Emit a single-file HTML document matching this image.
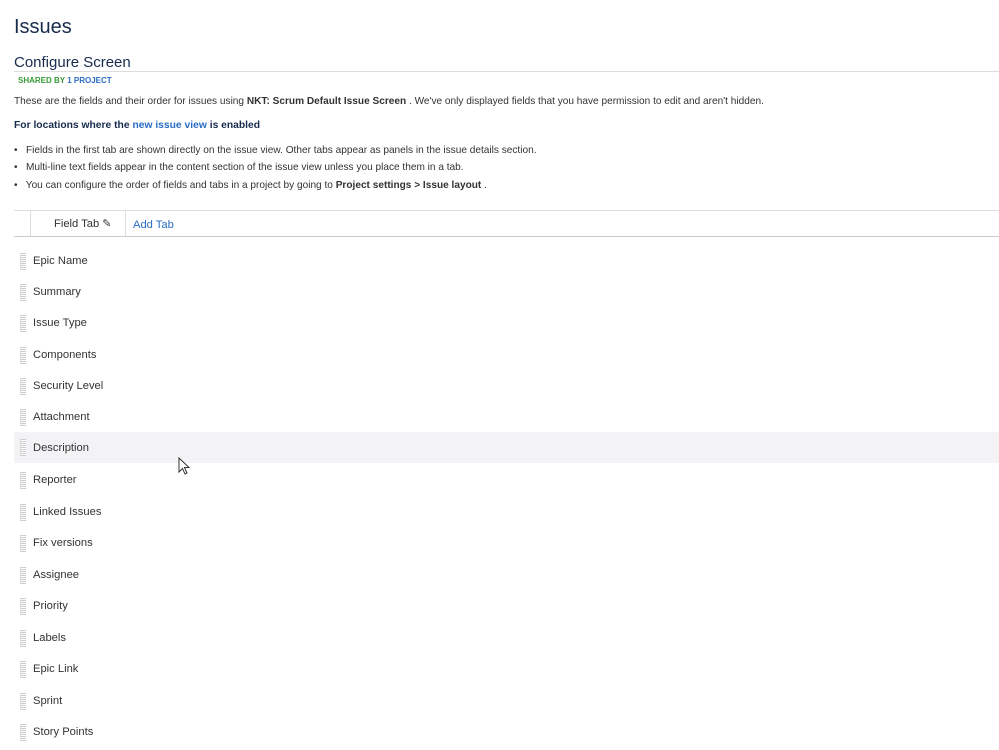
<!DOCTYPE html>
<html><head><style>
body{margin:0;width:999px;height:750px;background:#fff;font-family:"Liberation Sans",sans-serif;color:#172b4d;position:relative;overflow:hidden}
.a{position:absolute;white-space:nowrap}
.t{font-size:10.1px;color:#333}
.row{position:absolute;left:14px;right:0;height:31px}
.row .g{position:absolute;left:6px;top:7px;width:5px;height:17px;background:repeating-linear-gradient(#ccc 0 1px,#fff 1px 2px);border-left:1px solid #ddd}
.row span{position:absolute;left:19px;top:9px;font-size:11.2px;color:#333}
</style></head><body>
<div class="a" style="left:14px;top:16px;font-size:20px;color:#172b4d">Issues</div>
<div class="a" style="left:14px;top:54px;font-size:15px;color:#172b4d">Configure Screen</div>
<div class="a" style="left:14px;top:71px;width:985px;border-top:1px solid #ddd"></div>
<div class="a" style="left:18px;top:76px;font-size:8px;font-weight:bold;color:#3a9a3a">SHARED BY <span style="color:#2b6cc4">1 PROJECT</span></div>
<div class="a t" style="left:14px;top:96px">These are the fields and their order for issues using <b>NKT: Scrum Default Issue Screen</b> . We've only displayed fields that you have permission to edit and aren't hidden.</div>
<div class="a" style="left:14px;top:120px;font-size:10.3px;font-weight:bold;color:#172b4d">For locations where the <span style="color:#2b6cc4">new issue view</span> is enabled</div>
<div class="a t" style="left:14px;top:145px">•&nbsp;&nbsp; Fields in the first tab are shown directly on the issue view. Other tabs appear as panels in the issue details section.</div>
<div class="a t" style="left:14px;top:162px">•&nbsp;&nbsp; Multi-line text fields appear in the content section of the issue view unless you place them in a tab.</div>
<div class="a t" style="left:14px;top:180px">•&nbsp;&nbsp; You can configure the order of fields and tabs in a project by going to <b>Project settings &gt; Issue layout</b> .</div>
<div class="a" style="left:14px;top:210px;width:985px;border-top:1px solid #ddd"></div>
<div class="a" style="left:14px;top:236px;width:985px;border-top:1px solid #ccc"></div>
<div class="a" style="left:30px;top:211px;width:94px;height:25px;border-left:1px solid #ddd;border-right:1px solid #ddd;background:#fff"></div>
<div class="a" style="left:54px;top:217px;font-size:11.2px;color:#333">Field Tab ✎</div>
<div class="a" style="left:133px;top:219px;font-size:11.2px;color:#2b6cc4">Add Tab</div>
<div class="row" style="top:246px"><div class="g"></div><span>Epic Name</span></div>
<div class="row" style="top:277px"><div class="g"></div><span>Summary</span></div>
<div class="row" style="top:308px"><div class="g"></div><span>Issue Type</span></div>
<div class="row" style="top:340px"><div class="g"></div><span>Components</span></div>
<div class="row" style="top:371px"><div class="g"></div><span>Security Level</span></div>
<div class="row" style="top:402px"><div class="g"></div><span>Attachment</span></div>
<div class="row" style="top:432px;background:#f3f3f5"><div class="g"></div><span style="top:10px">Description</span></div>
<div class="row" style="top:465px"><div class="g"></div><span>Reporter</span></div>
<div class="row" style="top:497px"><div class="g"></div><span>Linked Issues</span></div>
<div class="row" style="top:528px"><div class="g"></div><span>Fix versions</span></div>
<div class="row" style="top:560px"><div class="g"></div><span>Assignee</span></div>
<div class="row" style="top:591px"><div class="g"></div><span>Priority</span></div>
<div class="row" style="top:623px"><div class="g"></div><span>Labels</span></div>
<div class="row" style="top:654px"><div class="g"></div><span>Epic Link</span></div>
<div class="row" style="top:686px"><div class="g"></div><span>Sprint</span></div>
<div class="row" style="top:717px"><div class="g"></div><span>Story Points</span></div>
<svg class="a" style="left:178px;top:457px" width="12" height="18" viewBox="0 0 12 18"><path d="M1 1 L1 15 L4.5 11.5 L7 17 L9 16 L6.5 10.5 L11 10.5 Z" fill="#fff" stroke="#333" stroke-width="1"/></svg>
</body></html>
